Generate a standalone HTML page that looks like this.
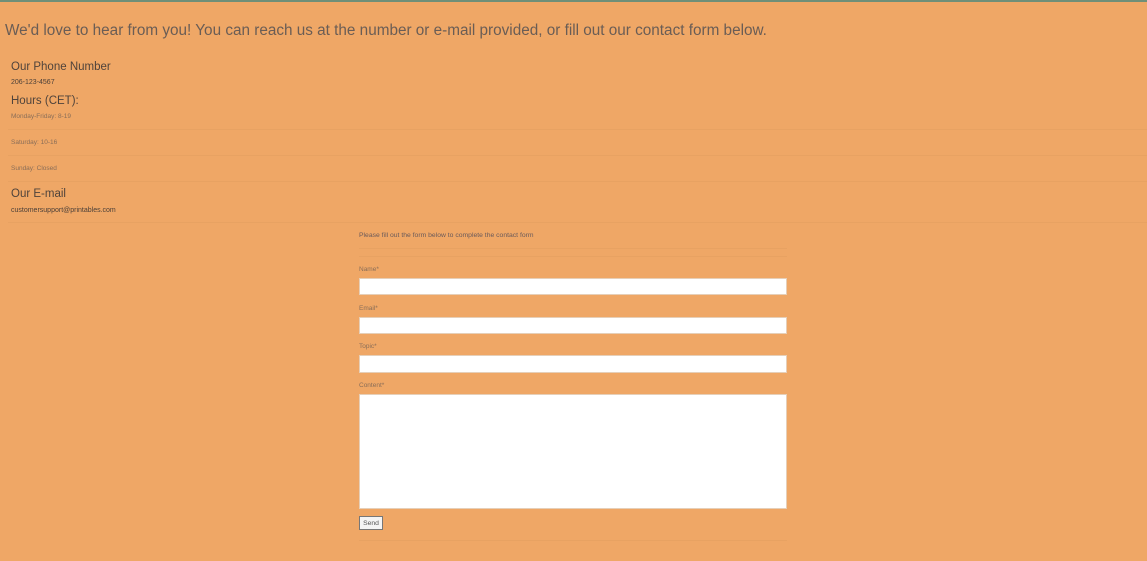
<!DOCTYPE html>
<html><head><style>
body{margin:0;width:1147px;height:561px;background:#efa766;font-family:"Liberation Sans",sans-serif;position:relative;overflow:hidden;color:#5a4a3e}
.a{position:absolute;white-space:nowrap}
.top{position:absolute;left:0;top:0;width:1147px;height:2px;background:#6f8f78}
.ln{position:absolute;height:1px;background:#e8a262}
.in{position:absolute;left:359px;width:426px;background:#fff;border:1px solid #e6cfb8}
</style></head><body>
<div class="top"></div>
<div class="a" style="left:5px;top:22px;font-size:15.3px;color:#6a5d55">We'd love to hear from you! You can reach us at the number or e-mail provided, or fill out our contact form below.</div>
<div class="a" style="left:11px;top:61px;font-size:11.5px;color:#4f433b">Our Phone Number</div>
<div class="a" style="left:11px;top:79px;font-size:7px;color:#4a3f38">206-123-4567</div>
<div class="a" style="left:11px;top:95px;font-size:11.5px;color:#4f433b">Hours (CET):</div>
<div class="a" style="left:11px;top:113px;font-size:6.5px;color:#8a6e58">Monday-Friday: 8-19</div>
<div class="ln" style="left:8px;width:1139px;top:129px"></div>
<div class="a" style="left:11px;top:139px;font-size:6.5px;color:#8a6e58">Saturday: 10-16</div>
<div class="ln" style="left:8px;width:1139px;top:155px"></div>
<div class="a" style="left:11px;top:165px;font-size:6.5px;color:#8a6e58">Sunday: Closed</div>
<div class="ln" style="left:8px;width:1139px;top:181px"></div>
<div class="a" style="left:11px;top:188px;font-size:11.5px;color:#4f433b">Our E-mail</div>
<div class="a" style="left:11px;top:207px;font-size:7px;color:#4a3f38">customersupport@printables.com</div>
<div class="ln" style="left:8px;width:1139px;top:222px"></div>
<div class="a" style="left:359px;top:232px;font-size:6.8px;color:#6a5a5a">Please fill out the form below to complete the contact form</div>
<div class="ln" style="left:359px;width:428px;top:248px"></div>
<div class="ln" style="left:359px;width:428px;top:256px"></div>
<div class="a" style="left:359px;top:266px;font-size:6.5px;color:#8a6e58">Name*</div>
<div class="in" style="top:278px;height:15px"></div>
<div class="a" style="left:359px;top:305px;font-size:6.5px;color:#8a6e58">Email*</div>
<div class="in" style="top:317px;height:15px"></div>
<div class="a" style="left:359px;top:343px;font-size:6.5px;color:#8a6e58">Topic*</div>
<div class="in" style="top:355px;height:16px"></div>
<div class="a" style="left:359px;top:382px;font-size:6.5px;color:#8a6e58">Content*</div>
<div class="in" style="top:394px;height:113px"></div>
<div class="a" style="left:359px;top:516px;width:22px;height:12px;background:#f4f4f4;border:1px solid #777;font-size:6.8px;line-height:13px;text-align:center;color:#555">Send</div>
<div class="ln" style="left:359px;width:428px;top:540px"></div>
</body></html>
